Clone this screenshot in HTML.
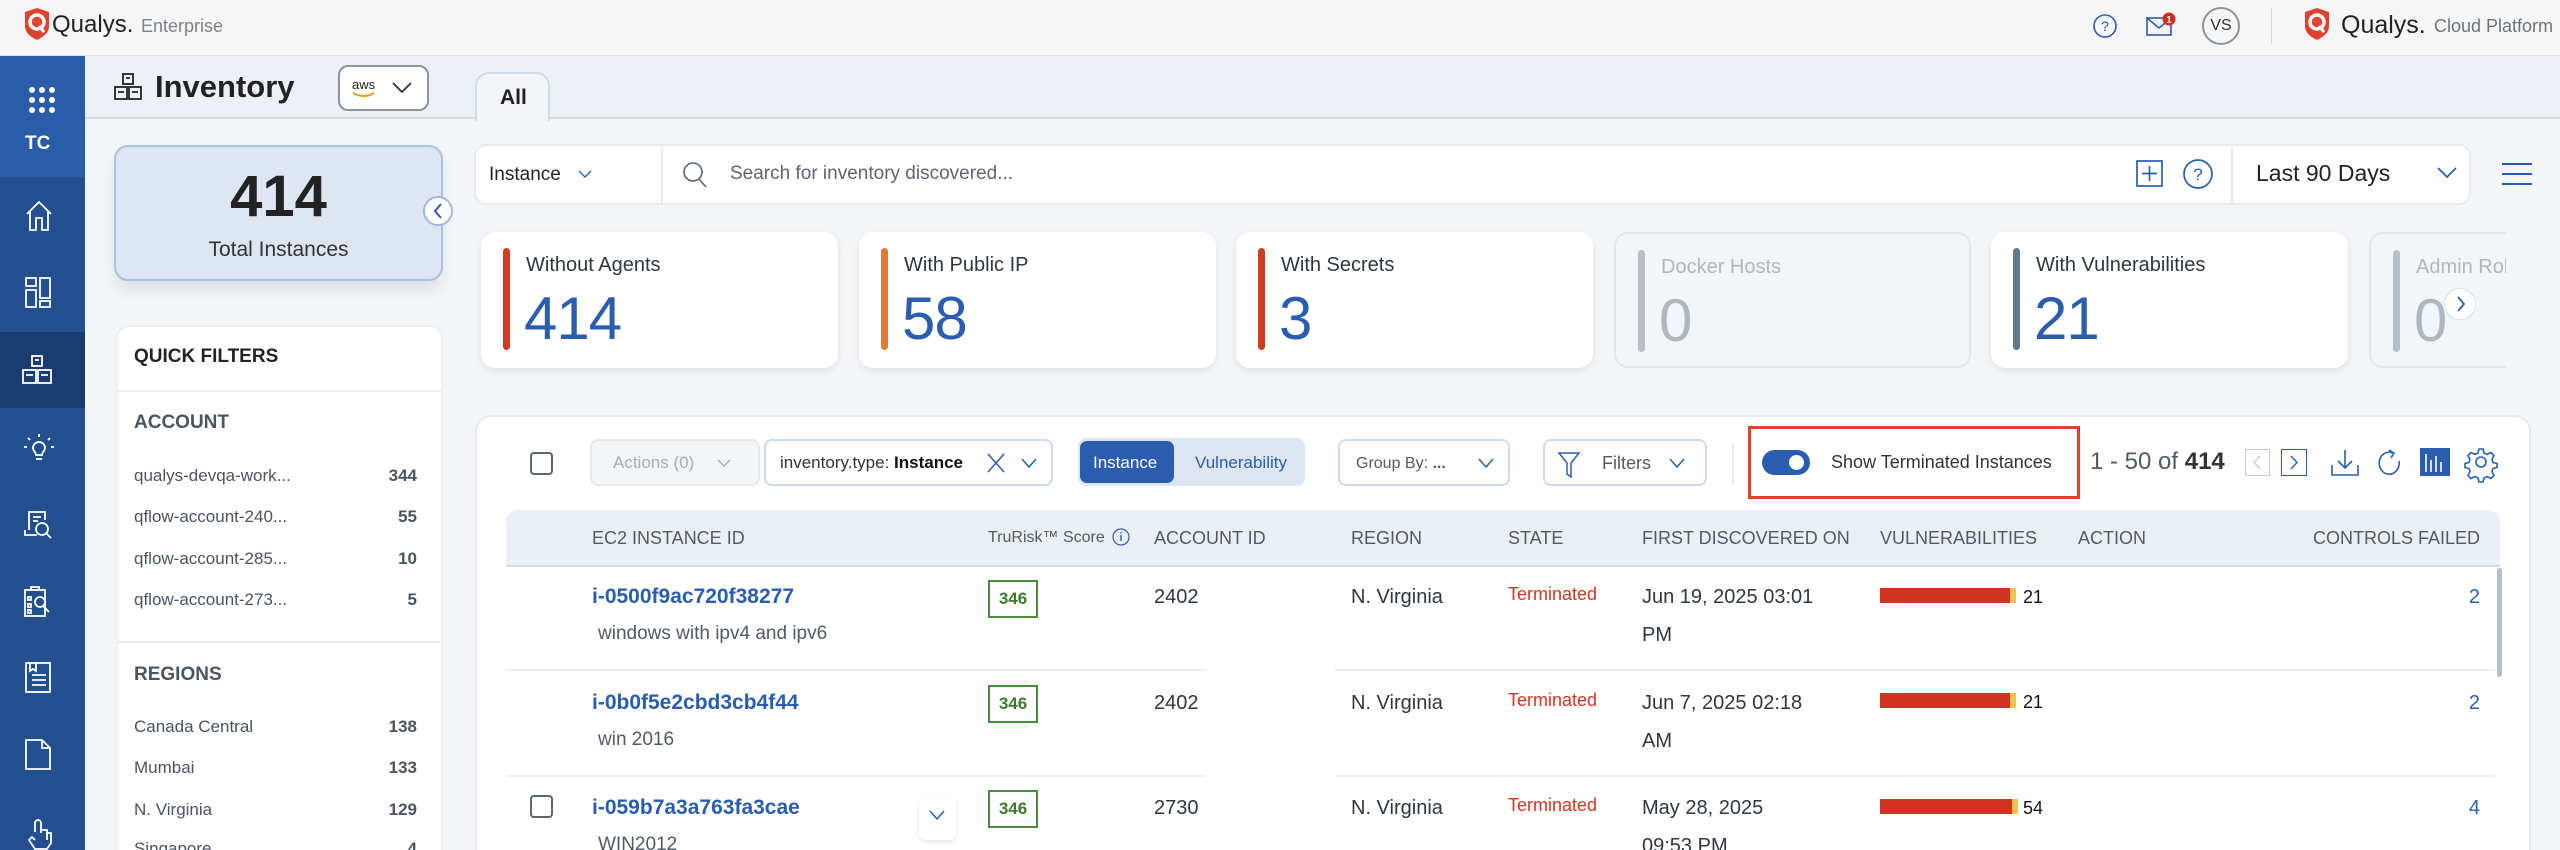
<!DOCTYPE html>
<html style="width:2560px;height:850px;overflow:hidden"><head><meta charset="utf-8"><style>
*{box-sizing:border-box;margin:0;padding:0}
html,body{overflow:hidden}
body{width:2560px;height:850px;overflow:hidden;background:#f3f5f8;font-family:"Liberation Sans",Arial,sans-serif;position:relative;color:#2d3740}
.a{position:absolute}
.t{position:absolute;white-space:nowrap;line-height:1}
svg{position:absolute;overflow:visible}
.card{position:absolute;top:232px;width:357px;height:136px;background:#fff;border-radius:14px;box-shadow:0 3px 8px rgba(0,0,0,.08)}
.card .bar{position:absolute;left:22px;top:16px;width:7px;height:102px;border-radius:4px}
.card .lb{position:absolute;left:45px;top:22px;font-size:20px;color:#2d3740;white-space:nowrap}
.card .nm{position:absolute;left:43px;top:52px;font-size:60px;color:#2a5db0;white-space:nowrap;letter-spacing:-1px}
.card.dis{background:#f3f5f8;border:2px solid #e3e7ec;box-shadow:none}
.card.dis .lb,.card.dis .nm{color:#aeb8c1}
.hd{position:absolute;top:528px;font-size:18px;color:#4f5b66;white-space:nowrap}
.id{position:absolute;left:592px;font-size:21px;font-weight:bold;color:#2a5db0}
.ds{position:absolute;left:598px;font-size:19px;color:#4f5b66}
.sc{position:absolute;left:988px;width:50px;height:38px;border:2px solid #4c8a3c;color:#3d7a2e;font-weight:bold;font-size:17px;text-align:center;line-height:34px}
.cl{position:absolute;font-size:20px;color:#2d3740;white-space:nowrap}
.tr{position:absolute;left:1508px;font-size:18px;color:#d6341f}
.vb{position:absolute;left:1880px;width:136px;height:15px;background:#cf3321;border-right:6px solid #f2c14e}
.qf{position:absolute;left:134px;font-size:17px;color:#495460}
.qn{position:absolute;right:2143px;font-size:17px;font-weight:bold;color:#495460}
</style></head><body>

<!-- top bar -->
<div class="a" style="left:0;top:0;width:2560px;height:56px;background:#f6f6f7;border-bottom:1px solid #e2e6eb"></div>
<svg style="left:24px;top:8px" width="26" height="32" viewBox="0 0 26 32"><path d="M13 0 L25 4 V18 C25 25 19 29 13 32 C7 29 1 25 1 18 V4 Z" fill="#e2412f"/><circle cx="13" cy="14" r="7" fill="none" stroke="#fff" stroke-width="3.5"/><path d="M15 18 L20 24" stroke="#fff" stroke-width="3"/></svg>
<div class="t" style="left:52px;top:13px;font-size:24px;color:#222">Qualys.</div>
<div class="t" style="left:141px;top:17px;font-size:18px;color:#7a838c">Enterprise</div>

<svg style="left:2092px;top:13px" width="26" height="26"><circle cx="13" cy="13" r="11" fill="none" stroke="#2a5db0" stroke-width="1.6"/><text x="13" y="18" font-size="14" text-anchor="middle" fill="#2a5db0" font-family="Liberation Sans">?</text></svg>
<svg style="left:2146px;top:12px" width="30" height="26"><rect x="1" y="6" width="24" height="17" fill="none" stroke="#2a5db0" stroke-width="1.6"/><path d="M1 6 L13 16 L25 6" fill="none" stroke="#2a5db0" stroke-width="1.6"/><circle cx="23" cy="7" r="6.5" fill="#d42e1e"/><text x="23" y="11" font-size="10" fill="#fff" text-anchor="middle" font-family="Liberation Sans" font-weight="bold">1</text></svg>
<div class="a" style="left:2202px;top:7px;width:38px;height:38px;border:2px solid #8a949d;border-radius:50%;text-align:center;line-height:34px;font-size:16px;color:#333">VS</div>
<div class="a" style="left:2271px;top:8px;width:1px;height:36px;background:#d6dadf"></div>
<svg style="left:2304px;top:7px" width="26" height="34" viewBox="0 0 26 32"><path d="M13 0 L25 4 V18 C25 25 19 29 13 32 C7 29 1 25 1 18 V4 Z" fill="#e2412f"/><circle cx="13" cy="14" r="7" fill="none" stroke="#fff" stroke-width="3.5"/><path d="M15 18 L20 24" stroke="#fff" stroke-width="3"/></svg>
<div class="t" style="left:2341px;top:13px;font-size:25px;color:#222">Qualys.</div>
<div class="t" style="left:2434px;top:17px;font-size:18px;color:#6b747c">Cloud Platform</div>

<!-- sidebar -->
<div class="a" style="left:0;top:56px;width:85px;height:794px;background:#234f8f"></div>
<div class="a" style="left:0;top:56px;width:85px;height:121px;background:#2b5ca9"></div>
<div class="a" style="left:0;top:332px;width:85px;height:76px;background:#1b3c70"></div>
<svg style="left:28px;top:87px" width="30" height="30"><g fill="#fff"><circle cx="4" cy="3" r="3"/><circle cx="14" cy="3" r="3"/><circle cx="24" cy="3" r="3"/><circle cx="4" cy="13" r="3"/><circle cx="14" cy="13" r="3"/><circle cx="24" cy="13" r="3"/><circle cx="4" cy="23" r="3"/><circle cx="14" cy="23" r="3"/><circle cx="24" cy="23" r="3"/></g></svg>
<div class="t" style="left:25px;top:134px;font-size:19px;font-weight:bold;color:#fff">TC</div>
<svg style="left:25px;top:200px" width="30" height="32" fill="none" stroke="#fff" stroke-width="1.8"><path d="M2 14 L14 2 L26 14 M5 11 V30 H11 V18 H17 V30 H23 V11"/></svg>
<svg style="left:25px;top:277px" width="28" height="32" fill="none" stroke="#fff" stroke-width="1.8"><rect x="1" y="1" width="10" height="8"/><rect x="1" y="13" width="10" height="17"/><rect x="15" y="1" width="10" height="20"/><rect x="15" y="24" width="10" height="6"/></svg>
<svg style="left:22px;top:355px" width="32" height="30" fill="none" stroke="#fff" stroke-width="1.8"><rect x="10" y="1" width="10" height="10"/><rect x="1" y="15" width="13" height="13"/><rect x="16" y="15" width="13" height="13"/><path d="M13 5h4M4 20h7M19 20h7"/></svg>
<svg style="left:23px;top:432px" width="32" height="32" fill="none" stroke="#fff" stroke-width="1.8"><path d="M16 2v3M5 6l2 2M27 6l-2 2M1 15h3M28 15h3"/><path d="M10 16a6 6 0 1 1 12 0c0 3-3 4-3 7h-6c0-3-3-4-3-7z"/><path d="M13 27h6"/></svg>
<svg style="left:23px;top:510px" width="32" height="32" fill="none" stroke="#fff" stroke-width="1.8"><path d="M6 20V2h16v8M2 20v5h12"/><path d="M10 7h8M10 11h5"/><circle cx="19" cy="19" r="6"/><path d="M23 23l5 5"/></svg>
<svg style="left:23px;top:586px" width="32" height="32" fill="none" stroke="#fff" stroke-width="1.8"><rect x="2" y="4" width="20" height="26"/><path d="M8 4V1h8v3"/><rect x="5" y="11" width="3" height="3"/><rect x="5" y="18" width="3" height="3"/><rect x="5" y="24" width="3" height="3"/><circle cx="17" cy="16" r="5"/><path d="M20 20l6 6"/></svg>
<svg style="left:25px;top:662px" width="28" height="32" fill="none" stroke="#fff" stroke-width="1.8"><rect x="1" y="1" width="24" height="29"/><path d="M5 1v8l3-2 3 2V1M7 13h14M7 18h14M7 23h14"/></svg>
<svg style="left:25px;top:739px" width="28" height="32" fill="none" stroke="#fff" stroke-width="1.8"><path d="M1 1h16l8 8v21H1z M17 1v8h8"/></svg>
<svg style="left:27px;top:818px" width="28" height="30" fill="none" stroke="#fff" stroke-width="1.8"><path d="M8 14V5a3 3 0 0 1 6 0v10M14 12h6v10M20 15h4v10l-4 6H8L2 22l3-3 3 3"/></svg>

<!-- header -->
<div class="a" style="left:85px;top:56px;width:2475px;height:63px;background:#edf1f6;border-bottom:2px solid #cfdcec"></div>
<svg style="left:114px;top:73px" width="30" height="28" fill="none" stroke="#222" stroke-width="1.8"><rect x="9" y="1" width="10" height="10"/><rect x="1" y="14" width="12" height="12"/><rect x="15" y="14" width="12" height="12"/><path d="M12 5h4M4 19h6M18 19h6"/></svg>
<div class="t" style="left:155px;top:71px;font-size:31px;font-weight:bold;color:#222">Inventory</div>
<div class="a" style="left:338px;top:65px;width:91px;height:46px;background:#fff;border:2px solid #8d96a0;border-radius:10px"></div>
<div class="t" style="left:352px;top:78px;font-size:13px;color:#222">aws</div>
<svg style="left:352px;top:92px" width="24" height="6"><path d="M1 1 Q12 7 22 1" fill="none" stroke="#f29a1f" stroke-width="2"/></svg>
<svg style="left:392px;top:82px" width="20" height="12"><path d="M1 1 L10 10 L19 1" fill="none" stroke="#333" stroke-width="1.8"/></svg>
<div class="a" style="left:475px;top:72px;width:75px;height:49px;background:#f3f5f8;border:2px solid #cfdcec;border-bottom:none;border-radius:14px 14px 0 0"></div>
<div class="t" style="left:500px;top:87px;font-size:21px;font-weight:bold;color:#222">All</div>

<!-- total card -->
<div class="a" style="left:114px;top:145px;width:329px;height:136px;background:#dde6f2;border:2px solid #a9c1e2;border-radius:14px;box-shadow:0 10px 14px rgba(0,0,0,.08)"></div>
<div class="t" style="left:114px;width:329px;text-align:center;top:168px;font-size:58px;font-weight:bold;color:#222">414</div>
<div class="t" style="left:114px;width:329px;text-align:center;top:239px;font-size:21px;color:#333">Total Instances</div>
<div class="a" style="left:423px;top:196px;width:30px;height:30px;background:#fff;border:2px solid #9fb9dc;border-radius:50%"></div>
<svg style="left:433px;top:203px" width="10" height="16"><path d="M8 1 L2 8 L8 15" fill="none" stroke="#2a5db0" stroke-width="2"/></svg>

<!-- quick filters -->
<div class="a" style="left:116px;top:325px;width:327px;height:525px;background:#fff;border:2px solid #eceff3;border-bottom:none;border-radius:14px 14px 0 0"></div>
<div class="t" style="left:134px;top:347px;font-size:19px;font-weight:bold;color:#222">QUICK FILTERS</div>
<div class="a" style="left:117px;top:390px;width:325px;height:2px;background:#eceff3"></div>
<div class="t" style="left:134px;top:413px;font-size:19px;font-weight:bold;color:#4a5561">ACCOUNT</div>
<div class="t qf" style="top:467px">qualys-devqa-work...</div><div class="t qn" style="top:467px">344</div>
<div class="t qf" style="top:508px">qflow-account-240...</div><div class="t qn" style="top:508px">55</div>
<div class="t qf" style="top:550px">qflow-account-285...</div><div class="t qn" style="top:550px">10</div>
<div class="t qf" style="top:591px">qflow-account-273...</div><div class="t qn" style="top:591px">5</div>
<div class="a" style="left:117px;top:641px;width:325px;height:2px;background:#eceff3"></div>
<div class="t" style="left:134px;top:665px;font-size:19px;font-weight:bold;color:#4a5561">REGIONS</div>
<div class="t qf" style="top:718px">Canada Central</div><div class="t qn" style="top:718px">138</div>
<div class="t qf" style="top:759px">Mumbai</div><div class="t qn" style="top:759px">133</div>
<div class="t qf" style="top:801px">N. Virginia</div><div class="t qn" style="top:801px">129</div>
<div class="t qf" style="top:840px">Singapore</div><div class="t qn" style="top:840px">4</div>

<!-- search bar -->
<div class="a" style="left:474px;top:144px;width:1997px;height:61px;background:#fff;border:2px solid #e6eaef;border-radius:12px"></div>
<div class="t" style="left:489px;top:165px;font-size:19px;color:#222">Instance</div>
<svg style="left:578px;top:170px" width="14" height="9"><path d="M1 1 L7 7 L13 1" fill="none" stroke="#2a5db0" stroke-width="1.4"/></svg>
<div class="a" style="left:661px;top:146px;width:2px;height:57px;background:#e6eaef"></div>
<svg style="left:682px;top:161px" width="26" height="28" fill="none" stroke="#5b6670" stroke-width="1.6"><circle cx="11" cy="11" r="9"/><path d="M17 18 L24 26"/></svg>
<div class="t" style="left:730px;top:164px;font-size:19px;color:#5b6670">Search for inventory discovered...</div>
<svg style="left:2136px;top:160px" width="28" height="28" fill="none" stroke="#2a5db0" stroke-width="1.7"><rect x="1" y="1" width="25" height="25"/><path d="M13.5 6v15M6 13.5h15"/></svg>
<svg style="left:2182px;top:158px" width="32" height="32"><circle cx="16" cy="16" r="14" fill="none" stroke="#2a5db0" stroke-width="1.7"/><text x="16" y="22" font-size="17" text-anchor="middle" fill="#2a5db0" font-family="Liberation Sans">?</text></svg>
<div class="a" style="left:2231px;top:146px;width:2px;height:57px;background:#e6eaef"></div>
<div class="t" style="left:2256px;top:162px;font-size:23px;color:#222">Last 90 Days</div>
<svg style="left:2437px;top:167px" width="20" height="12"><path d="M1 1 L10 10 L19 1" fill="none" stroke="#2a5db0" stroke-width="1.7"/></svg>
<svg style="left:2502px;top:163px" width="30" height="22"><path d="M0 1h30M0 11h30M0 21h30" stroke="#2a5db0" stroke-width="2"/></svg>

<!-- stat cards -->
<div class="card" style="left:481px"><div class="bar" style="background:#d23a22"></div><div class="lb">Without Agents</div><div class="nm">414</div></div>
<div class="card" style="left:859px"><div class="bar" style="background:#e07b39"></div><div class="lb">With Public IP</div><div class="nm">58</div></div>
<div class="card" style="left:1236px"><div class="bar" style="background:#d23a22"></div><div class="lb">With Secrets</div><div class="nm">3</div></div>
<div class="card dis" style="left:1614px"><div class="bar" style="background:#b6c0c8"></div><div class="lb">Docker Hosts</div><div class="nm">0</div></div>
<div class="card" style="left:1991px"><div class="bar" style="background:#637a8a"></div><div class="lb">With Vulnerabilities</div><div class="nm">21</div></div>
<div class="a" style="left:2369px;top:232px;width:137px;height:136px;overflow:hidden"><div class="card dis" style="left:0;top:0"><div class="bar" style="background:#b6c0c8"></div><div class="lb">Admin Roles</div><div class="nm">0</div></div></div>
<div class="a" style="left:2444px;top:288px;width:32px;height:32px;background:#fff;border:1px solid #d6e0ec;border-radius:50%"></div>
<svg style="left:2456px;top:296px" width="10" height="16"><path d="M2 1 L8 8 L2 15" fill="none" stroke="#2a5db0" stroke-width="1.8"/></svg>

<!-- table panel -->
<div class="a" style="left:475px;top:415px;width:2056px;height:435px;background:#fff;border:2px solid #e6eaef;border-bottom:none;border-radius:16px 16px 0 0"></div>
<div class="a" style="left:530px;top:452px;width:23px;height:23px;border:2px solid #5b6670;border-radius:4px"></div>
<div class="a" style="left:590px;top:439px;width:170px;height:47px;background:#f3f5f8;border:2px solid #e3e8ee;border-radius:8px"></div>
<div class="t" style="left:613px;top:454px;font-size:17px;color:#a4adb6">Actions (0)</div>
<svg style="left:717px;top:459px" width="14" height="9"><path d="M1 1 L7 7 L13 1" fill="none" stroke="#a4adb6" stroke-width="1.4"/></svg>
<div class="a" style="left:764px;top:439px;width:289px;height:47px;background:#fff;border:2px solid #ccdaea;border-radius:8px"></div>
<div class="t" style="left:780px;top:454px;font-size:17px;color:#333">inventory.type: <b style="color:#111">Instance</b></div>
<svg style="left:987px;top:453px" width="18" height="20"><path d="M1 1 L17 19 M17 1 L1 19" stroke="#2a5db0" stroke-width="1.5"/></svg>
<svg style="left:1021px;top:458px" width="16" height="10"><path d="M1 1 L8 9 L15 1" fill="none" stroke="#2a5db0" stroke-width="1.5"/></svg>
<div class="a" style="left:1078px;top:438px;width:227px;height:48px;background:#dde6f2;border-radius:8px"></div>
<div class="a" style="left:1080px;top:441px;width:94px;height:42px;background:#2a5db0;border-radius:7px"></div>
<div class="t" style="left:1093px;top:454px;font-size:17px;color:#fff">Instance</div>
<div class="t" style="left:1195px;top:454px;font-size:17px;color:#2a5db0">Vulnerability</div>
<div class="a" style="left:1338px;top:439px;width:172px;height:47px;background:#fff;border:2px solid #ccdaea;border-radius:8px"></div>
<div class="t" style="left:1356px;top:456px;font-size:16px;color:#4f5b66">Group By: <b>...</b></div>
<svg style="left:1478px;top:458px" width="16" height="10"><path d="M1 1 L8 9 L15 1" fill="none" stroke="#2a5db0" stroke-width="1.5"/></svg>
<div class="a" style="left:1543px;top:439px;width:164px;height:47px;background:#fff;border:2px solid #ccdaea;border-radius:8px"></div>
<svg style="left:1558px;top:452px" width="22" height="26"><path d="M1 1 H21 L13 11 V25 L9 22 V11 Z" fill="none" stroke="#2a5db0" stroke-width="1.5"/></svg>
<div class="t" style="left:1602px;top:454px;font-size:18px;color:#4f5b66">Filters</div>
<svg style="left:1669px;top:458px" width="16" height="10"><path d="M1 1 L8 9 L15 1" fill="none" stroke="#2a5db0" stroke-width="1.5"/></svg>
<div class="a" style="left:1732px;top:444px;width:2px;height:40px;background:#e3e8ee"></div>
<div class="a" style="left:1748px;top:426px;width:332px;height:73px;border:3px solid #e0412b"></div>
<div class="a" style="left:1762px;top:450px;width:48px;height:25px;background:#2a5db0;border-radius:13px"></div>
<div class="a" style="left:1789px;top:455px;width:15px;height:15px;background:#fff;border-radius:50%"></div>
<div class="t" style="left:1831px;top:453px;font-size:18px;color:#333">Show Terminated Instances</div>
<div class="t" style="left:2090px;top:450px;font-size:24px;color:#4f5b66">1 - 50 of <b style="color:#333">414</b></div>
<div class="a" style="left:2245px;top:449px;width:25px;height:27px;border:1.5px solid #c3cad2"></div>
<svg style="left:2253px;top:455px" width="8" height="15"><path d="M7 1 L1 7.5 L7 14" fill="none" stroke="#c3cad2" stroke-width="1.4"/></svg>
<div class="a" style="left:2281px;top:449px;width:26px;height:27px;border:1.5px solid #2a5db0"></div>
<svg style="left:2290px;top:455px" width="8" height="15"><path d="M1 1 L7 7.5 L1 14" fill="none" stroke="#2a5db0" stroke-width="1.4"/></svg>
<svg style="left:2331px;top:449px" width="28" height="28" fill="none" stroke="#2a5db0" stroke-width="1.6"><path d="M14 1v18M7 12l7 7 7-7M1 16v10h26V16"/></svg>
<svg style="left:2378px;top:449px" width="24" height="30" fill="none" stroke="#2a5db0" stroke-width="1.6"><path d="M15 4A10 11 0 1 0 21 12"/><path d="M11 1l5 3-3 5"/></svg>
<div class="a" style="left:2420px;top:448px;width:30px;height:28px;background:#2a5db0"></div>
<svg style="left:2424px;top:452px" width="22" height="20" fill="none" stroke="#fff" stroke-width="1.6"><path d="M2 2v18M7 8v12M12 4v16M17 10v10"/></svg>
<svg style="left:2466px;top:447px" width="30" height="30" fill="none" stroke="#2a5db0" stroke-width="1.6"><circle cx="15" cy="15" r="5"/><path d="M13 2h4l1 4 3 1.5 4-2 3 3-2 4 1 3 4 1v4l-4 1-1 3 2 4-3 3-4-2-3 1.5-1 4h-4l-1-4-3-1.5-4 2-3-3 2-4-1-3-4-1v-4l4-1 1-3-2-4 3-3 4 2 3-1.5z"/></svg>

<!-- table header -->
<div class="a" style="left:506px;top:510px;width:1994px;height:57px;background:#ebf0f6;border-bottom:2px solid #cfdcec;border-radius:12px 12px 0 0"></div>
<div class="hd" style="left:592px">EC2 INSTANCE ID</div>
<div class="hd" style="left:988px;font-size:16px;top:529px">TruRisk™ Score</div>
<svg style="left:1112px;top:528px" width="18" height="18"><circle cx="9" cy="9" r="8" fill="none" stroke="#2a5db0" stroke-width="1.2"/><path d="M9 7v6M9 4v1.5" stroke="#2a5db0" stroke-width="1.4"/></svg>
<div class="hd" style="left:1154px">ACCOUNT ID</div>
<div class="hd" style="left:1351px">REGION</div>
<div class="hd" style="left:1508px">STATE</div>
<div class="hd" style="left:1642px">FIRST DISCOVERED ON</div>
<div class="hd" style="left:1880px">VULNERABILITIES</div>
<div class="hd" style="left:2078px">ACTION</div>
<div class="hd" style="right:80px">CONTROLS FAILED</div>

<!-- rows -->
<div class="a" style="left:2497px;top:568px;width:5px;height:109px;background:#b4bcc4;border-radius:3px"></div>
<div class="a" style="left:506px;top:669px;width:700px;height:2px;background:#eceff3"></div>
<div class="a" style="left:1335px;top:669px;width:1160px;height:2px;background:#eceff3"></div>
<div class="a" style="left:506px;top:775px;width:700px;height:2px;background:#eceff3"></div>
<div class="a" style="left:1335px;top:775px;width:1160px;height:2px;background:#eceff3"></div>

<div class="t id" style="top:586px">i-0500f9ac720f38277</div>
<div class="t ds" style="top:624px">windows with ipv4 and ipv6</div>
<div class="sc" style="top:580px">346</div>
<div class="cl" style="left:1154px;top:586px">2402</div>
<div class="cl" style="left:1351px;top:586px">N. Virginia</div>
<div class="t tr" style="top:585px">Terminated</div>
<div class="cl" style="left:1642px;top:586px">Jun 19, 2025 03:01</div>
<div class="cl" style="left:1642px;top:624px">PM</div>
<div class="vb" style="top:588px"></div><div class="cl" style="left:2023px;top:587px;font-size:18px;color:#111">21</div>
<div class="cl" style="right:80px;top:586px;color:#2a5db0">2</div>

<div class="t id" style="top:692px">i-0b0f5e2cbd3cb4f44</div>
<div class="t ds" style="top:730px">win 2016</div>
<div class="sc" style="top:685px">346</div>
<div class="cl" style="left:1154px;top:692px">2402</div>
<div class="cl" style="left:1351px;top:692px">N. Virginia</div>
<div class="t tr" style="top:691px">Terminated</div>
<div class="cl" style="left:1642px;top:692px">Jun 7, 2025 02:18</div>
<div class="cl" style="left:1642px;top:730px">AM</div>
<div class="vb" style="top:693px"></div><div class="cl" style="left:2023px;top:692px;font-size:18px;color:#111">21</div>
<div class="cl" style="right:80px;top:692px;color:#2a5db0">2</div>

<div class="a" style="left:530px;top:795px;width:23px;height:23px;border:2px solid #5b6670;border-radius:4px"></div>
<div class="t id" style="top:797px">i-059b7a3a763fa3cae</div>
<div class="t ds" style="top:835px">WIN2012</div>
<div class="a" style="left:919px;top:798px;width:37px;height:42px;background:#fff;border-radius:6px;box-shadow:0 2px 5px rgba(0,0,0,.1)"></div>
<svg style="left:929px;top:810px" width="16" height="10"><path d="M1 1 L8 9 L15 1" fill="none" stroke="#2a5db0" stroke-width="1.5"/></svg>
<div class="sc" style="top:790px">346</div>
<div class="cl" style="left:1154px;top:797px">2730</div>
<div class="cl" style="left:1351px;top:797px">N. Virginia</div>
<div class="t tr" style="top:796px">Terminated</div>
<div class="cl" style="left:1642px;top:797px">May 28, 2025</div>
<div class="cl" style="left:1642px;top:835px">09:53 PM</div>
<div class="vb" style="top:799px;width:138px"></div><div class="cl" style="left:2023px;top:798px;font-size:18px;color:#111">54</div>
<div class="cl" style="right:80px;top:797px;color:#2a5db0">4</div>

</body></html>
